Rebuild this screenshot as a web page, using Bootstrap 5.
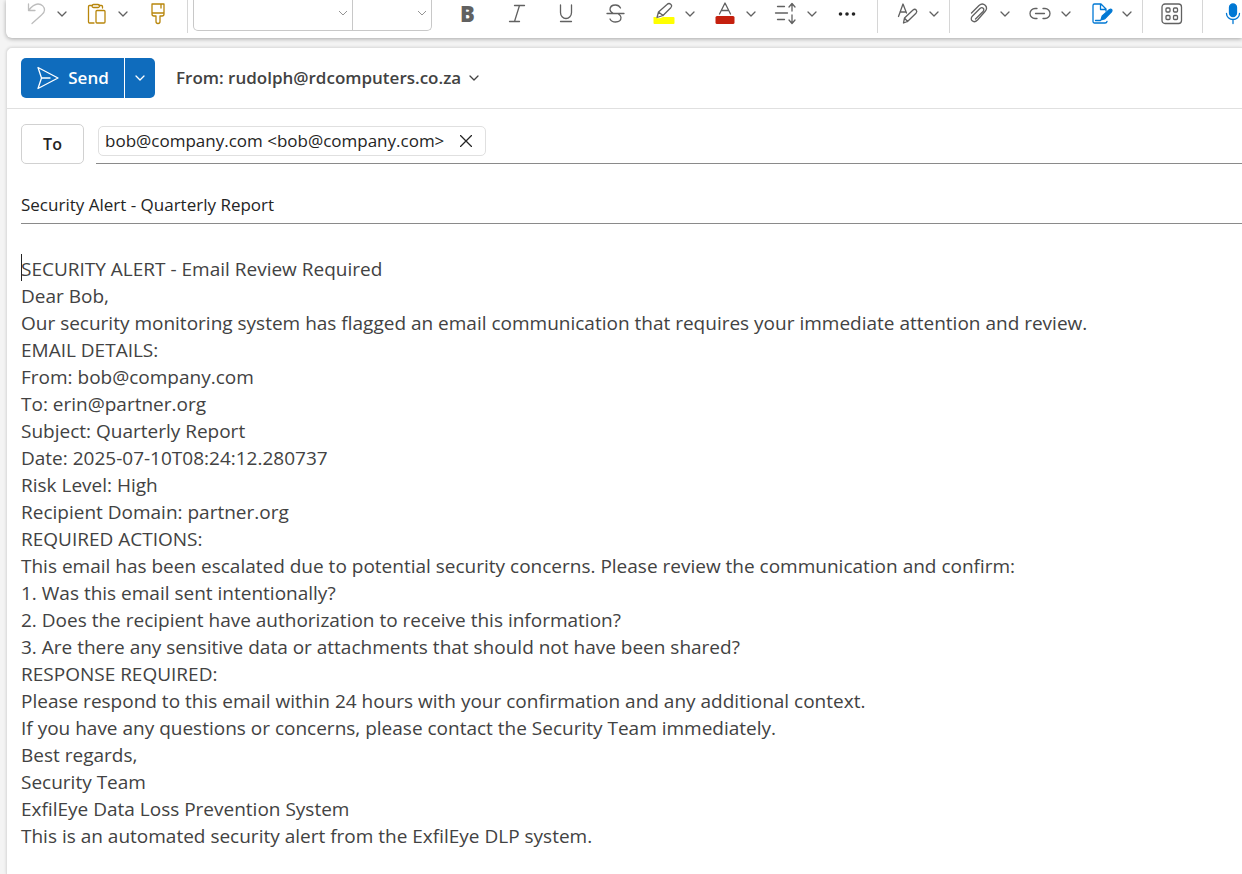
<!DOCTYPE html>
<html lang="en">
<head>
<meta charset="utf-8">
<meta name="viewport" content="width=device-width, initial-scale=1">
<title>Security Alert - Quarterly Report</title>
<link href="https://cdn.jsdelivr.net/npm/bootstrap@5.3.0/dist/css/bootstrap.min.css" rel="stylesheet">
<style>
  body { background: #f4f4f4; color: #424242; font-family: "Open Sans", "Noto Sans", sans-serif; padding-left: 6px; }
  svg { fill: none; stroke: currentColor; stroke-width: 1.3; stroke-linecap: round; stroke-linejoin: round; display: block; flex: none; }
  button { border: 0; background: transparent; color: inherit; padding: 0; }
  .ribbon { height: 38px; background: #fff; border-radius: 0 0 0 6px; box-shadow: 0 1px 4px rgba(0,0,0,.32); color: #616161; padding-left: 14px; }
  .tool, .caret { height: 28px; flex: none; display: flex; align-items: center; justify-content: center; }
  .tool { width: 32px; }
  .caret { width: 20px; }
  .pair { display: flex; flex: none; }
  .pair + .pair, .pair + .tool { margin-left: 9px; }
  .format { margin-left: 11px; }
  .format .tool { width: 49px; }
  .letter { font-size: 22px; line-height: 26px; font-weight: 800; padding-bottom: 2px; }
  .rule { width: 1px; height: 33px; background: #d6d6d6; flex: none; margin: 0 14px; }
  .rule-near { margin-left: 5px; margin-right: 13px; }
  .rule-fonts { margin-left: 13px; margin-right: 5px; }
  .font-pick { height: 31px; flex: none; border: 1px solid #c8c8c8; border-top: 0; border-radius: 0 0 0 5px; width: 160px; background-size: 10px 10px; background-position: right 4px top 8px; padding: 0; background-color: #fff;
    background-image: url("data:image/svg+xml,%3Csvg xmlns='http://www.w3.org/2000/svg' viewBox='0 0 10 10'%3E%3Cpath d='M1 3l4 4 4-4' fill='none' stroke='%23949494'/%3E%3C/svg%3E"); }
  .size-pick { width: 80px; border-radius: 0 0 5px 0; margin-left: -1px; }
  .compose { background: #fff; border-top: 1px solid #e0e0e0; border-left: 1px solid #e0e0e0; border-radius: 6px 0 0 0; box-shadow: 0 0 3px rgba(0,0,0,.12); margin-top: 9px; }
  .send-row { height: 61px; border-bottom: 1px solid #e0e0e0; padding-left: 14px; }
  .send { height: 40px; background: #0f6cbd; color: #fff; font-size: 17px; font-weight: 600; border-radius: 5px 0 0 5px; width: 103px; }
  .send-more { height: 40px; width: 30px; background: #0f6cbd; color: #fff; border-radius: 0 5px 5px 0; margin-left: 1px; }
  .from { font-size: 17px; font-weight: 600; margin-left: 21px; }
  .fields { padding: 15px 0 0 14px; }
  .to-btn { width: 63px; height: 40px; border: 1px solid #d1d1d1; border-radius: 5px; font-size: 16px; font-weight: 600; color: #242424; flex: none; }
  .line { border-bottom: 1px solid #8a8a8a; }
  .to-line { height: 40px; padding: 2px 0 0 2px; margin-left: 12px; }
  .chip { height: 30px; border: 1px solid #e0e0e0; border-radius: 5px; padding: 0 13px 0 6px; font-size: 17px; line-height: 26px; color: #242424; }
  .subject { height: 40px; border: 0; border-bottom: 1px solid #8a8a8a; width: 100%; font-size: 17px; color: #242424; padding: 2px 0 0; outline: 0; background: transparent; display: block; margin-top: 20px; }
  .message { padding: 32px 0 24px 14px; font-size: 19px; line-height: 27px; outline: 0; }
  .message p { margin: 0; }
  .cursor { position: absolute; left: 0; top: -2px; width: 1px; height: 27px; background: #242424; }
</style>
<script src="https://cdn.jsdelivr.net/npm/bootstrap@5.3.0/dist/js/bootstrap.bundle.min.js"></script>
</head>
<body class="min-vh-100 d-flex flex-column overflow-x-hidden">
<svg width="0" height="0" class="position-absolute" aria-hidden="true"><symbol id="chev" viewBox="0 0 10 10"><path d="M1 3l4 4 4-4"/></symbol></svg>

<header class="ribbon d-flex align-items-start">
  <div class="pair"><button class="tool" aria-label="Undo"><svg width="24" height="24" color="#bdbdbd"><path d="M4.500 2v6.500h6.500M4.500 8.500C8 4 11 2 14 2c4 0 6.500 3 6.500 6 0 2-1 3.500-3 5L8 21.500"/></svg></button><button class="caret" aria-label="Undo options"><svg width="10" height="10"><use href="#chev"/></svg></button></div>
  <div class="pair"><button class="tool" aria-label="Paste"><svg width="24" height="24" color="#b8860b"><path d="M7.500 3.500H4.500a1 1 0 0 0-1 1v15.500a1 1 0 0 0 1 1H9M14 3.500h2.500a1 1 0 0 1 1 1V6M8.500 2.500h4.500a1 1 0 0 1 0 3H8.500a1 1 0 0 1 0-3z"/><rect x="11" y="8.500" width="9" height="12.500" rx="1"/></svg></button><button class="caret" aria-label="Paste options"><svg width="10" height="10"><use href="#chev"/></svg></button></div>
  <button class="tool" aria-label="Format painter"><svg width="24" height="24" color="#b8860b"><path d="M6 2h12v10a2 2 0 0 1-2 2h-2v5.500a2 2 0 0 1-4 0V14H8a2 2 0 0 1-2-2zM6 11h12M15 2v4"/></svg></button>
  <span class="rule rule-fonts"></span>
  <select class="form-select font-pick" aria-label="Font"><option></option></select><select class="form-select font-pick size-pick" aria-label="Font size"><option></option></select>
  <div class="pair format">
    <button class="tool letter" aria-label="Bold">B</button>
    <button class="tool" aria-label="Italic"><svg width="24" height="24"><path d="M9.500 3.500h10M4.500 19.500h10M14.500 3.500l-5 16"/></svg></button>
    <button class="tool" aria-label="Underline"><svg width="24" height="24"><path d="M6.500 3v7.500a5.500 6 0 0 0 11 0V3M6.500 19.500h11"/></svg></button>
    <button class="tool" aria-label="Strikethrough"><svg width="24" height="24"><path d="M17.500 6C16.500 4 14.500 3 12.500 3 9.500 3 7 4.500 7 7.500c0 2 1.500 3 3.500 4M4 11.500h17M15.500 12c1.500 1 2.500 2 2.500 3.500 0 3-2.500 4.500-5.500 4.500-2.500 0-4.500-1-5.500-3"/></svg></button>
  </div>
  <div class="pair"><button class="tool" aria-label="Highlight"><svg width="24" height="24"><path fill="#ffff00" stroke="none" d="M1.500 15H4c1 2 4 1.500 7 0h10.500a1 1 0 0 1 1 1v5a1 1 0 0 1-1 1h-19a1 1 0 0 1-1-1z"/><path fill="#fff" d="M5 15.500l1.500-5.500L15 2.500c2.500-2.500 6 .5 3.800 3.200L11 13.500zM6.500 10l4.500 3.500"/></svg></button><button class="caret" aria-label="Highlight colors"><svg width="10" height="10"><use href="#chev"/></svg></button></div>
  <div class="pair"><button class="tool" aria-label="Font color"><svg width="24" height="24"><path d="M6.500 12L12 1l5.500 11M8.500 8.500h7"/><rect x="2.500" y="14" width="19" height="8" rx="1.500" fill="#c5200e" stroke="none"/></svg></button><button class="caret" aria-label="Font colors"><svg width="10" height="10"><use href="#chev"/></svg></button></div>
  <div class="pair"><button class="tool" aria-label="Line spacing"><svg width="24" height="24"><path d="M3.500 4.500h7M1.500 11h12M3.500 17.500h7M18 9V2M15 5l3-3.500L21 5M18 13v8M15 18l3 3.500 3-3.500"/></svg></button><button class="caret" aria-label="Line spacing options"><svg width="10" height="10"><use href="#chev"/></svg></button></div>
  <button class="tool" aria-label="More formatting"><svg width="24" height="24"><g fill="#242424" stroke="none"><circle cx="5.500" cy="12" r="1.800"/><circle cx="12" cy="12" r="1.800"/><circle cx="18.500" cy="12" r="1.800"/></g></svg></button>
  <span class="rule"></span>
  <div class="pair"><button class="tool" aria-label="Styles"><svg width="24" height="24"><path d="M2.500 14.500L7 2l3.500 9M4 10h5.500M7.500 21l1-5 8.500-8c2.500-2 5 1 3 3.200L11.500 19.500zM8.500 16l3 3.500"/></svg></button><button class="caret" aria-label="Styles options"><svg width="10" height="10"><use href="#chev"/></svg></button></div>
  <span class="rule rule-near"></span>
  <div class="pair"><button class="tool" aria-label="Attach file"><svg width="24" height="24"><path d="M4.500 11l7.500-7.500c4.500-4 10 1.500 6 6L10.500 18c-4 4-8.500-.5-5-4l7.500-7.500c2.500-2 5 .5 3 3L8.500 17"/></svg></button><button class="caret" aria-label="Attach options"><svg width="10" height="10"><use href="#chev"/></svg></button></div>
  <div class="pair"><button class="tool" aria-label="Link"><svg width="24" height="24"><path d="M9 6.500H7a5 5 0 0 0 0 10h2M15 6.500h2a5 5 0 0 1 0 10h-2M7.500 11.500h9"/></svg></button><button class="caret" aria-label="Link options"><svg width="10" height="10"><use href="#chev"/></svg></button></div>
  <div class="pair"><button class="tool" aria-label="Signature"><svg width="24" height="24" color="#0078d4"><path d="M18 19.500a2 2 0 0 1-2 1.500H5.500a1.500 1.500 0 0 1-1.500-1.500V3.500A1.500 1.500 0 0 1 5.500 2H12l5 5v2M11.500 2v5.500H17M6.500 18.500h5"/><path fill="currentColor" d="M12 18l1.200-4 7.300-6.500c2-1 3 .7 2 2.200L15.500 17z"/></svg></button><button class="caret" aria-label="Signature options"><svg width="10" height="10"><use href="#chev"/></svg></button></div>
  <span class="rule rule-near"></span>
  <button class="tool" aria-label="Apps"><svg width="24" height="24"><rect x="2" y="2" width="19.500" height="19.500" rx="3"/><rect x="6" y="6" width="4" height="4" rx="1"/><rect x="13.500" y="6" width="4" height="4" rx="1"/><rect x="6" y="13.500" width="4" height="4" rx="1"/><rect x="13.500" y="13.500" width="4" height="4" rx="1"/></svg></button>
  <span class="rule"></span>
  <button class="tool" aria-label="Dictate"><svg width="24" height="24" color="#0078d4"><rect x="8.500" y="2" width="7" height="12.500" rx="3.500" fill="currentColor"/><path d="M5.500 11.500a6.500 6 0 0 0 13 0M12 17.500v4"/></svg></button>
</header>

<main class="compose flex-grow-1">
  <div class="send-row d-flex align-items-center">
    <button class="send d-flex align-items-center justify-content-center gap-2"><svg width="24" height="24"><path d="M2 1.500l20 10.500L2 22.500l3.500-10.500zM5.500 12H14"/></svg>Send</button>
    <button class="send-more d-flex align-items-center justify-content-center" aria-label="Send options"><svg width="10" height="10" stroke-width="2"><use href="#chev"/></svg></button>
    <button class="from d-flex align-items-center gap-2"><span>From: rudolph@rdcomputers.co.za</span><svg width="10" height="10"><use href="#chev"/></svg></button>
  </div>
  <div class="fields">
    <div class="d-flex">
      <button class="to-btn">To</button>
      <div class="to-line line flex-grow-1 d-flex align-items-start">
        <div class="chip d-flex align-items-center gap-3"><span>bob@company.com &lt;bob@company.com&gt;</span><button aria-label="Remove recipient"><svg width="12" height="12"><path d="M.5.5l11 11M11.500.5l-11 11"/></svg></button></div>
      </div>
    </div>
    <input class="subject" type="text" aria-label="Subject" value="Security Alert - Quarterly Report">
  </div>
  <div class="message" contenteditable="true" role="textbox" aria-label="Message body" spellcheck="false">
    <p class="position-relative"><span class="cursor"></span>SECURITY ALERT - Email Review Required</p>
    <p>Dear Bob,</p>
    <p>Our security monitoring system has flagged an email communication that requires your immediate attention and review.</p>
    <p>EMAIL DETAILS:</p>
    <p>From: bob@company.com</p>
    <p>To: erin@partner.org</p>
    <p>Subject: Quarterly Report</p>
    <p>Date: 2025-07-10T08:24:12.280737</p>
    <p>Risk Level: High</p>
    <p>Recipient Domain: partner.org</p>
    <p>REQUIRED ACTIONS:</p>
    <p>This email has been escalated due to potential security concerns. Please review the communication and confirm:</p>
    <p>1. Was this email sent intentionally?</p>
    <p>2. Does the recipient have authorization to receive this information?</p>
    <p>3. Are there any sensitive data or attachments that should not have been shared?</p>
    <p>RESPONSE REQUIRED:</p>
    <p>Please respond to this email within 24 hours with your confirmation and any additional context.</p>
    <p>If you have any questions or concerns, please contact the Security Team immediately.</p>
    <p>Best regards,</p>
    <p>Security Team</p>
    <p>ExfilEye Data Loss Prevention System</p>
    <p>This is an automated security alert from the ExfilEye DLP system.</p>
  </div>
</main>
</body>
</html>
